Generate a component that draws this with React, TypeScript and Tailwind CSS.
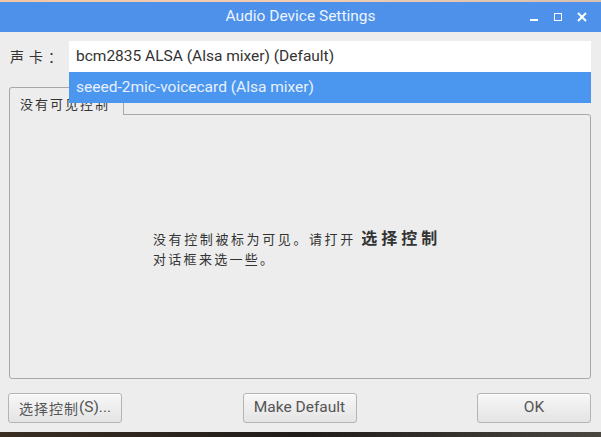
import React from "react";

const cjk = { fontFamily: '"Noto Sans CJK SC", "Noto Sans", sans-serif' };
const rob = { fontFamily: 'Roboto, "Noto Sans CJK SC", sans-serif' };

function Btn({ children, w, font }: { children: React.ReactNode; w: string; font: React.CSSProperties }) {
  return (
    <div
      className={`${w} h-[30px] flex items-center justify-center rounded-[3px] border border-[#b4b4b4] bg-gradient-to-b from-[#f7f7f7] to-[#e4e4e4] text-[15.5px] text-[#555] shadow-[0_1px_0_rgba(255,255,255,0.8)_inset]`}
      style={font}
    >
      {children}
    </div>
  );
}

export default function App() {
  return (
    <div className="w-[601px] h-[437px] flex flex-col bg-[#2a2420] overflow-hidden">
      <div className="h-[2px] bg-gradient-to-r from-[#f2c7a6] via-[#f4cdb0] to-[#d8c0b0]" />
      <div className="flex flex-col bg-[#ededed] h-[430px] relative">
        {/* title bar */}
        <div className="h-[30px] bg-[#4d91ea] relative flex items-center justify-center">
          <span className="text-[15.5px] text-[#eef4ff]" style={rob}>Audio Device Settings</span>
          <div className="absolute right-[12px] top-0 h-full flex items-center gap-[10px]">
            <div className="w-[14px] h-[14px] flex items-end justify-center pb-[3px]">
              <div className="w-[8px] h-[2px] bg-white" />
            </div>
            <div className="w-[14px] h-[14px] flex items-center justify-center">
              <div className="w-[8px] h-[8px] border-[1.5px] border-white" />
            </div>
            <svg width="14" height="14" viewBox="0 0 14 14">
              <path d="M3 3 L11 11 M11 3 L3 11" stroke="white" strokeWidth="2" />
            </svg>
          </div>
        </div>
        {/* sound card row */}
        <div className="flex items-center mt-[9px] h-[31px]">
          <span className="w-[69px] pl-[10px] text-[14px] text-[#333] tracking-[5px]" style={cjk}>声卡：</span>
          <div className="w-[522px] h-[31px] bg-white flex items-center pl-[7px] text-[15.5px] text-[#333]" style={rob}>
            bcm2835 ALSA (Alsa mixer) (Default)
          </div>
        </div>
        {/* tabs */}
        <div className="ml-[9px] mt-[15px] flex">
          <div className="w-[115px] h-[28px] border border-[#a8a8a8] border-b-0 rounded-t-[3px] bg-[#ededed] pl-[10px] pt-[6px] text-[13px] text-[#333] tracking-[2px] relative z-10" style={cjk}>
            没有可见控制
          </div>
        </div>
        <div className="ml-[9px] w-[582px] h-[265px] -mt-[1px] border border-[#a8a8a8] rounded-b-[3px] rounded-tr-[3px] flex items-center">
          <div className="pl-[143px] text-[13px] text-[#333] leading-[20px] pt-[2px]" style={cjk}>
            <div className="tracking-[2.6px]">
              没有控制被标为可见。请打开 <span className="font-bold text-[16px] tracking-[4px]">选择控制</span>
            </div>
            <div className="tracking-[2.3px]">对话框来选一些。</div>
          </div>
        </div>
        {/* buttons */}
        <div className="flex items-center mt-[14px] px-[8px] justify-between pr-[10px]">
          <Btn w="w-[114px]" font={cjk}>
            <span className="text-[14px] tracking-[1px]">选择控制</span>
            <span style={rob}>(S)...</span>
          </Btn>
          <Btn w="w-[114px]" font={rob}>Make Default</Btn>
          <Btn w="w-[114px]" font={rob}>OK</Btn>
        </div>
        {/* dropdown popup */}
        <div className="absolute left-[69px] top-[70px] w-[522px] h-[31px] bg-[#4b97f0] flex items-center pl-[7px] text-[15.5px] text-[#e8f0fd] z-20" style={rob}>
          seeed-2mic-voicecard (Alsa mixer)
        </div>
      </div>
      <div className="flex-1 bg-gradient-to-r from-[#3a2e22] via-[#201c1a] to-[#4a4640]" />
    </div>
  );
}
